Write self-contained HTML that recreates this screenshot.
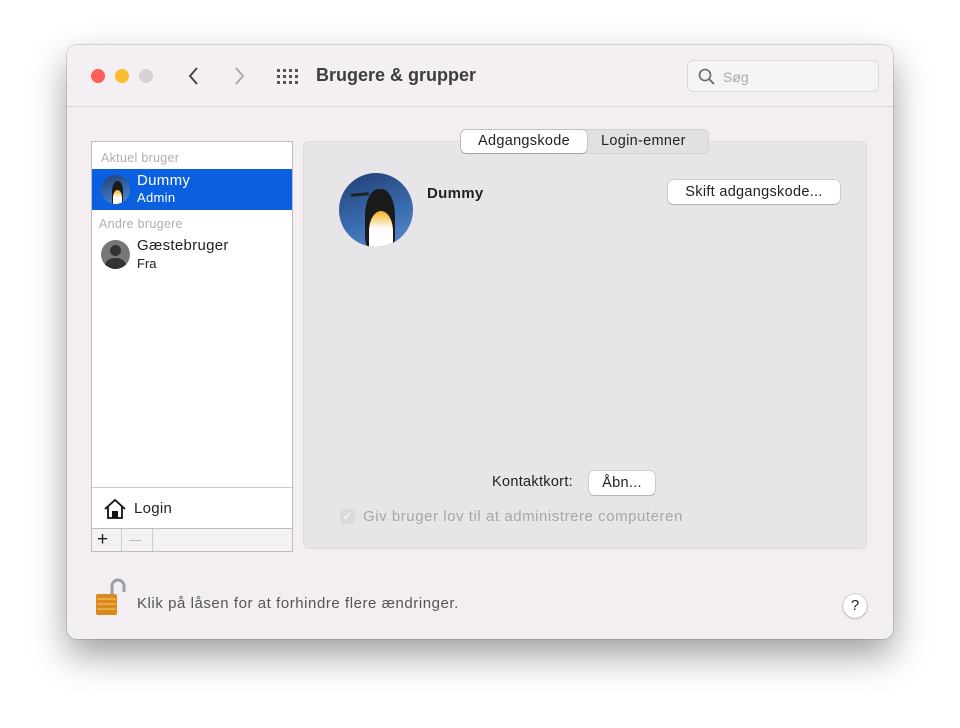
<!DOCTYPE html>
<html><head><meta charset="utf-8"><style>
*{box-sizing:border-box;margin:0;padding:0}
body{width:960px;height:728px;background:#fff;font-family:"Liberation Sans",sans-serif;position:relative;overflow:hidden}
.win{position:absolute;left:67px;top:45px;width:826px;height:594px;background:#f2eef1;border-radius:10px;box-shadow:0 16px 36px rgba(0,0,0,.38),0 0 0 1px rgba(0,0,0,.12)}
.tb{position:absolute;left:0;top:0;width:826px;height:62px;border-bottom:1px solid #d9d5d8;background:#f3eff2;border-radius:10px 10px 0 0}
.dot{position:absolute;top:24px;width:14px;height:14px;border-radius:50%}
.a{position:absolute}
.list{position:absolute;left:24px;top:96px;width:202px;height:388px;background:#fff;border:1px solid #bfbcbe}
.sel{position:absolute;left:0;top:27px;width:200px;height:41px;background:#0a60de}
.grey{color:#b0adb0;font-size:12.5px;letter-spacing:.3px}
.panel{position:absolute;left:236px;top:96px;width:564px;height:408px;background:#e8e5e8;border-radius:6px;border:1px solid #dedade}
.btn{position:absolute;background:#fff;border-radius:5px;box-shadow:0 0 0 .5px rgba(0,0,0,.2),0 1px 1px rgba(0,0,0,.15);font-size:14.5px;color:#222;text-align:center;letter-spacing:.3px}
</style></head><body>
<div class="win">
<div class="tb">
<div class="dot" style="left:24px;background:#fe5f57"></div>
<div class="dot" style="left:48px;background:#febc2e"></div>
<div class="dot" style="left:72px;background:#d6d3d6"></div>
<svg class="a" style="left:120px;top:21px" width="14" height="20"><path d="M10 2L3 10l7 8" fill="none" stroke="#444" stroke-width="2"/></svg>
<svg class="a" style="left:165px;top:21px" width="14" height="20"><path d="M4 2l7 8-7 8" fill="none" stroke="#aaa" stroke-width="2"/></svg>
<svg class="a" style="left:209px;top:23px" width="24" height="16" fill="#555">
<g><rect x="1" y="1" width="3" height="3"/><rect x="7" y="1" width="3" height="3"/><rect x="13" y="1" width="3" height="3"/><rect x="19" y="1" width="3" height="3"/>
<rect x="1" y="7" width="3" height="3"/><rect x="7" y="7" width="3" height="3"/><rect x="13" y="7" width="3" height="3"/><rect x="19" y="7" width="3" height="3"/>
<rect x="1" y="13" width="3" height="3"/><rect x="7" y="13" width="3" height="3"/><rect x="13" y="13" width="3" height="3"/><rect x="19" y="13" width="3" height="3"/></g></svg>
<div class="a" style="left:249px;top:20px;font-size:18px;font-weight:bold;color:#3d3d3d">Brugere &amp; grupper</div>
<div class="a" style="left:620px;top:15px;width:192px;height:32px;border:1px solid #dcd8db;border-radius:6px;background:#f6f3f5"></div>
<svg class="a" style="left:631px;top:23px" width="18" height="18"><circle cx="7" cy="7" r="5.5" fill="none" stroke="#666" stroke-width="1.6"/><path d="M11 11l5 5" stroke="#666" stroke-width="1.8"/></svg>
<div class="a" style="left:656px;top:24px;font-size:14px;color:#aaa">Søg</div>
</div>
<div class="list">
<div class="a grey" style="left:9px;top:9px">Aktuel bruger</div>
<div class="sel"></div>
<div class="a" style="left:9px;top:33px;width:29px;height:29px;border-radius:50%;overflow:hidden;background:linear-gradient(160deg,#203e74,#3b6eb2 60%,#5c8ccd)"><div class="a" style="left:11px;top:6px;width:11px;height:24px;border-radius:45% 45% 0 0;background:#1a1a1a"></div><div class="a" style="left:12px;top:15px;width:9px;height:15px;border-radius:50% 50% 0 0;background:linear-gradient(#f6b21f,#fff 50%)"></div></div>
<div class="a" style="left:45px;top:30px;color:#fff;font-size:15px;letter-spacing:.3px">Dummy</div>
<div class="a" style="left:45px;top:48px;color:#fff;font-size:13px;letter-spacing:.3px">Admin</div>
<div class="a grey" style="left:7px;top:75px">Andre brugere</div>
<div class="a" style="left:9px;top:98px;width:29px;height:29px;border-radius:50%;background:#777;overflow:hidden"><div class="a" style="left:9px;top:5px;width:11px;height:11px;border-radius:50%;background:#333"></div><div class="a" style="left:4px;top:18px;width:21px;height:14px;border-radius:50%;background:#333"></div></div>
<div class="a" style="left:45px;top:95px;color:#222;font-size:15px;letter-spacing:.3px">Gæstebruger</div>
<div class="a" style="left:45px;top:114px;color:#222;font-size:13px">Fra</div>
<div class="a" style="left:0;top:345px;width:200px;border-top:1px solid #ccc"></div>
<svg class="a" style="left:11px;top:356px" width="24" height="22"><path d="M2 11L12 2l10 9M5 9v11h14V9" fill="none" stroke="#111" stroke-width="1.8"/><rect x="9" y="13" width="6" height="7" fill="#111"/></svg>
<div class="a" style="left:42px;top:358px;font-size:15px;color:#222;letter-spacing:.3px">Login</div>
</div>
<div class="a" style="left:24px;top:483px;width:202px;height:24px;background:#f4f1f3;border:1px solid #bfbcbe">
<div class="a" style="left:5px;top:0;font-size:19px;color:#222;line-height:22px">+</div>
<div class="a" style="left:29px;top:0;height:22px;border-left:1px solid #ccc"></div>
<div class="a" style="left:37px;top:11px;width:12px;border-top:1px solid #bbb"></div>
<div class="a" style="left:60px;top:0;height:22px;border-left:1px solid #ccc"></div>
</div>
<div class="panel"></div>
<div class="a" style="left:393px;top:84px;width:249px;height:25px;background:#e3e0e3;border-radius:6px;border:1px solid #d6d2d5"></div>
<div class="btn" style="left:394px;top:85px;width:126px;height:23px;line-height:23px">Adgangskode</div>
<div class="a" style="left:534px;top:88px;font-size:14.5px;color:#222;letter-spacing:.3px">Login-emner</div>
<div class="a" style="left:272px;top:128px;width:74px;height:74px;border-radius:50%;overflow:hidden;background:linear-gradient(160deg,#203e74,#3b6eb2 60%,#5c8ccd)">
<div class="a" style="left:26px;top:16px;width:30px;height:60px;border-radius:45% 45% 20% 20%;background:#1a1a1a"></div>
<div class="a" style="left:30px;top:38px;width:24px;height:40px;border-radius:50% 50% 0 0;background:linear-gradient(#f6b21f,#fff 45%)"></div>
<div class="a" style="left:12px;top:20px;width:18px;height:3px;background:#222;transform:rotate(-5deg)"></div>
</div>
<div class="a" style="left:360px;top:140px;font-weight:bold;font-size:15px;color:#222;letter-spacing:.3px">Dummy</div>
<div class="btn" style="left:601px;top:135px;width:172px;height:24px;line-height:24px">Skift adgangskode...</div>
<div class="a" style="left:425px;top:429px;font-size:14.5px;color:#222;letter-spacing:.3px">Kontaktkort:</div>
<div class="btn" style="left:522px;top:426px;width:66px;height:24px;line-height:24px">Åbn...</div>
<div class="a" style="left:273px;top:464px;width:15px;height:15px;border-radius:4px;background:#dcd9dc;color:#fff;font-size:12px;text-align:center;line-height:15px">✓</div>
<div class="a" style="left:296px;top:463px;font-size:15px;color:#a9a6a9;letter-spacing:.55px">Giv bruger lov til at administrere computeren</div>
<svg class="a" style="left:27px;top:532px" width="34" height="40"><path d="M18 18V9a6 6 0 0 1 12 0v6" fill="none" stroke="#9aa0a6" stroke-width="3"/><rect x="2" y="17" width="21" height="21" rx="2" fill="#d98a1e"/><g stroke="#f3b44a" stroke-width="1.5"><path d="M3 22h19M3 27h19M3 32h19"/></g></svg>
<div class="a" style="left:70px;top:550px;font-size:15px;color:#555;letter-spacing:.55px">Klik på låsen for at forhindre flere ændringer.</div>
<div class="a" style="left:776px;top:549px;width:24px;height:24px;border-radius:50%;background:#fff;box-shadow:0 0 0 .5px rgba(0,0,0,.25),0 1px 2px rgba(0,0,0,.2);text-align:center;line-height:24px;font-size:15px;color:#222">?</div>
</div>
</body></html>
